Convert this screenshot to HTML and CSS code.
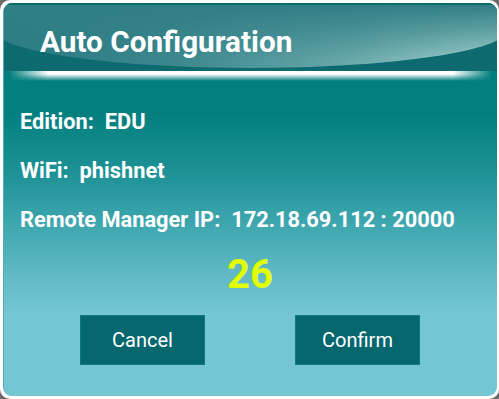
FILE: index.html
```html
<!DOCTYPE html>
<html lang="en">
<head>
  <meta charset="UTF-8">
  <meta name="viewport" content="width=device-width, initial-scale=1.0">
  <title>Auto Configuration</title>
  <link rel="stylesheet" href="styles.css">
</head>
<body>

  <div class="dialog">
    <div class="panel">
      <div class="header">
        <div class="gloss"></div>
        <h1>Auto Configuration</h1>
      </div>
      <div class="glow"></div>

      <div class="content">
        <p class="row">Edition:&nbsp; EDU</p>
        <p class="row">WiFi:&nbsp; phishnet</p>
        <p class="row">Remote Manager IP:&nbsp; 172.18.69.112 : 20000</p>
        <div class="count">26</div>
        <div class="actions">
          <button class="btn">Cancel</button>
          <button class="btn">Confirm</button>
        </div>
      </div>
    </div>
  </div>

</body>
</html>
```

FILE: styles.css
```css
html, body { margin: 0; height: 100%; }
body { background: #6b6b6b; font-family: Roboto, "Liberation Sans", sans-serif; overflow: hidden; }

.dialog { width: 499px; height: 399px; box-sizing: border-box; background: #fff; border-radius: 10px; padding: 3px 2px 3px 3px; }
.panel { height: 100%; border-radius: 9px; overflow: hidden; display: flex; flex-direction: column;
  border-left: 1px solid #5aa9ae; box-sizing: border-box;
  background: linear-gradient(to bottom, #027e7e 0px, #037f7f 110px, #1d9296 170px, #44aab3 230px, #66bdc9 280px, #74c6d4 310px); }

.header { position: relative; height: 66px; background: #0d6b70; border-top: 2px solid #0b6a6e; }
.gloss { position: absolute; left: -10px; right: -10px; top: 0; height: 63px;
  border-radius: 0 0 50% 50% / 0 0 38px 38px;
  background: linear-gradient(to bottom, #307f85 0%, rgba(48,127,133,0.6) 40%, rgba(48,127,133,0) 90%),
    linear-gradient(to right, #2a7a81 0%, #3b878d 35%, #6aa9ac 70%, #acd5d3 100%); }
.header h1 { position: relative; margin: 0; padding: 20px 0 0 36px; color: #fff; font-size: 29.7px; font-weight: 700; line-height: 34px; }

.glow { height: 10px;
  background: linear-gradient(to right, rgba(255,255,255,0) 1%, #fff 9%, #fff 91%, rgba(255,255,255,0) 99%);
  -webkit-mask-image: linear-gradient(to bottom, #000 30%, transparent);
  mask-image: linear-gradient(to bottom, #000 30%, transparent); }

.content { padding: 28px 0 0 16px; }
.row { margin: 0 0 23px; color: #fff; font-size: 21.8px; font-weight: 700; line-height: 26px; }
.count { margin-top: -3px; text-align: center; color: #e2ff00; font-size: 40px; font-weight: 700; line-height: 44px; padding-right: 17px; }
.actions { display: flex; justify-content: center; gap: 90px; margin-top: 18px; padding-right: 17px; }
.btn { width: 125px; height: 50px; border: 1px solid #0e7a80; background: #07676f; color: #fff; font-family: inherit; font-size: 20px; }
```
